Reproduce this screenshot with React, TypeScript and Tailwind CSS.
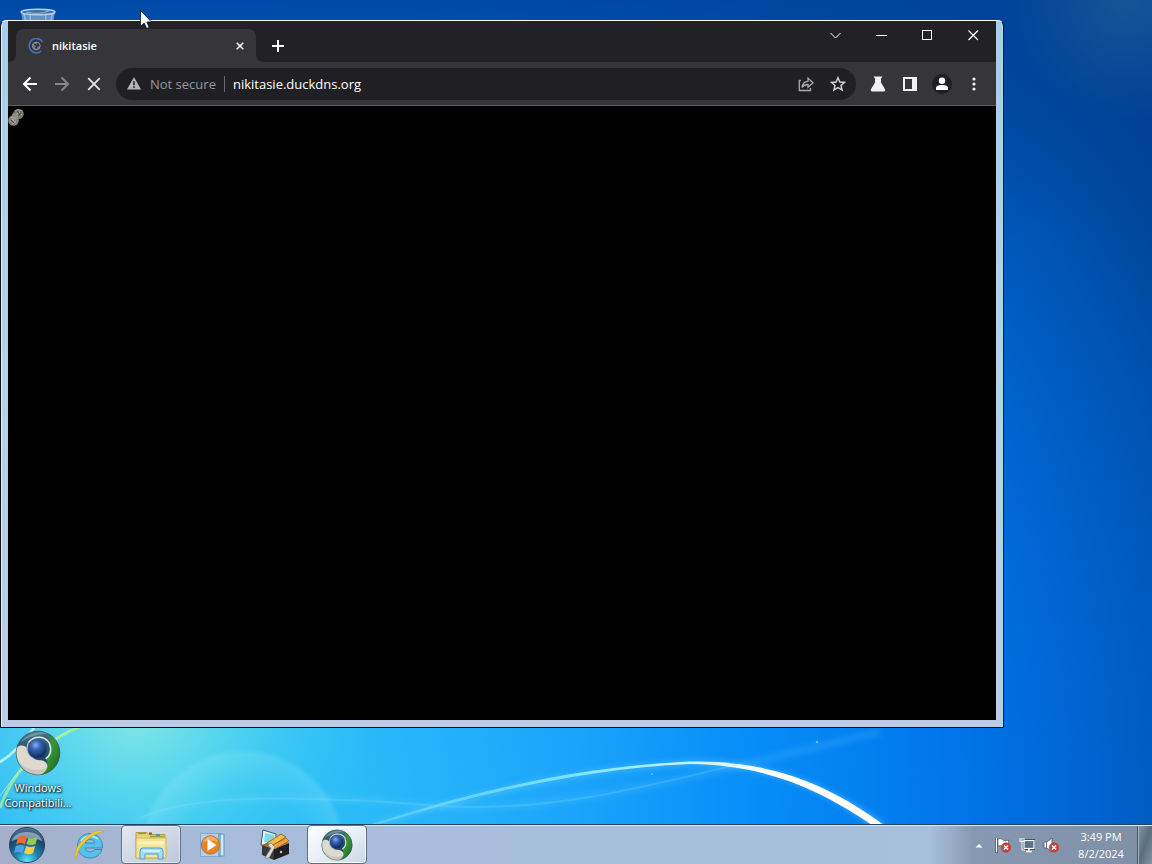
import { useState, type ReactNode } from "react"

function Wallpaper() {
  return (
    <svg className="absolute inset-0 h-full w-full" viewBox="0 0 1152 824" preserveAspectRatio="none" aria-hidden="true">
      <defs>
        <radialGradient id="sky" gradientUnits="userSpaceOnUse" cx="200" cy="800" r="1180">
          <stop offset="0" stopColor="#22bff5" />
          <stop offset="0.14" stopColor="#2abaf8" />
          <stop offset="0.32" stopColor="#1aa4fb" />
          <stop offset="0.48" stopColor="#068cf8" />
          <stop offset="0.64" stopColor="#0075ea" />
          <stop offset="0.76" stopColor="#0063cf" />
          <stop offset="0.86" stopColor="#0054b2" />
          <stop offset="0.97" stopColor="#004293" />
          <stop offset="1" stopColor="#003f8e" />
        </radialGradient>
        <radialGradient id="leftGlow" gradientUnits="userSpaceOnUse" cx="135" cy="705" r="250">
          <stop offset="0" stopColor="#8ae9e4" />
          <stop offset="0.35" stopColor="#6be0ea" stopOpacity="0.7" />
          <stop offset="1" stopColor="#3cc8f6" stopOpacity="0" />
        </radialGradient>
        <linearGradient id="topShade" x1="0" y1="0" x2="0" y2="1">
          <stop offset="0" stopColor="#00439c" stopOpacity="0.85" />
          <stop offset="1" stopColor="#00439c" stopOpacity="0" />
        </linearGradient>
        <radialGradient id="cornerHaze" gradientUnits="userSpaceOnUse" cx="1125" cy="0" r="120">
          <stop offset="0" stopColor="#1d5d93" stopOpacity="0.7" />
          <stop offset="1" stopColor="#1d5d93" stopOpacity="0" />
        </radialGradient>
        <radialGradient id="disc" gradientUnits="userSpaceOnUse" cx="243" cy="852" r="104">
          <stop offset="0.6" stopColor="#a5f0f8" stopOpacity="0" />
          <stop offset="0.94" stopColor="#a5f0f8" stopOpacity="0.2" />
          <stop offset="1" stopColor="#a5f0f8" stopOpacity="0" />
        </radialGradient>
        <linearGradient id="arc" gradientUnits="userSpaceOnUse" x1="370" y1="0" x2="880" y2="0">
          <stop offset="0" stopColor="#6fdcff" stopOpacity="0.5" />
          <stop offset="0.4" stopColor="#7ce4ff" />
          <stop offset="0.7" stopColor="#d8f8ff" />
          <stop offset="0.8" stopColor="#ffffff" />
        </linearGradient>
        <filter id="soft" x="-10%" y="-30%" width="120%" height="160%">
          <feGaussianBlur stdDeviation="3" />
        </filter>
      </defs>
      <rect width="1152" height="824" fill="url(#sky)" />
      <rect width="1152" height="240" fill="url(#topShade)" />
      <rect width="1152" height="824" fill="url(#cornerHaze)" />
      <rect width="1152" height="824" fill="url(#leftGlow)" />
      <circle cx="243" cy="852" r="104" fill="url(#disc)" />
      <path d="M130 822C190 796 270 796 340 799C390 801 410 806 450 807C560 812 690 777 880 732" fill="none" stroke="#7fdcff" strokeOpacity="0.22" strokeWidth="5" filter="url(#soft)" />
      <path d="M140 818C190 796 270 797 340 800C400 801 420 806 460 807C560 809 640 788 740 764" fill="none" stroke="#9ce8ff" strokeOpacity="0.18" strokeWidth="2" />
      <path d="M0 762C12 755 24 742 34 728" fill="none" stroke="#c9fbf9" strokeWidth="3" opacity="0.8" />
      <path d="M0 808C14 768 42 742 82 726" fill="none" stroke="#a6ef9c" strokeWidth="3" opacity="0.8" />
      <path d="M0 796C18 770 44 744 70 730" fill="none" stroke="#d9f7b8" strokeWidth="1" opacity="0.6" />
      <path
        d="M372 824C470 794 570 769 680 762C770 758 830 786 888 826L872 826C820 786 765 765 690 765C580 770 476 796 376 825Z"
        fill="#8fdcff"
        opacity="0.5"
        filter="url(#soft)"
      />
      <path
        d="M372 824C468 793 570 768 680 762C768 758 828 784 884 825L872 825C815 786 762 765 690 764C580 769 474 795 376 825Z"
        fill="url(#arc)"
      />
      <circle cx="817" cy="742" r="1.2" fill="#6fc0ff" />
      <circle cx="652" cy="774" r="1" fill="#5fc4ff" />
    </svg>
  )
}

function RecycleBin() {
  return (
    <svg viewBox="0 0 38 44" className="h-11 w-[38px]" aria-hidden="true">
      <path d="M2 4L8 42H30L36 4Z" fill="#7fa9d6" opacity="0.75" />
      <path d="M5 6L8 20M11 7L12 20M27 7L26 20M33 6L31 20" stroke="#b9d3ee" strokeWidth="1.5" opacity="0.6" />
      <ellipse cx="19" cy="4" rx="17" ry="2.8" fill="#3c6ea8" stroke="#b9d0e6" strokeWidth="1.4" />
      <path d="M7 4Q19 7 30 3" fill="none" stroke="#8fb4da" />
    </svg>
  )
}

// Three-blade swirl with a blue ball, used on the desktop and in the taskbar
function BrowserLogo({ className }: { className: string }) {
  return (
    <svg viewBox="0 0 48 48" className={className} aria-hidden="true">
      <defs>
        <radialGradient id="ball" cx="0.4" cy="0.3" r="0.75">
          <stop offset="0" stopColor="#86aeea" />
          <stop offset="0.35" stopColor="#3765b4" />
          <stop offset="1" stopColor="#0d2252" />
        </radialGradient>
        <linearGradient id="bladeTop" x1="0" y1="0" x2="0" y2="1">
          <stop offset="0" stopColor="#4c7286" />
          <stop offset="0.6" stopColor="#1e4866" />
          <stop offset="1" stopColor="#2f5a6c" />
        </linearGradient>
        <linearGradient id="bladeGreen" x1="0" y1="0" x2="1" y2="1">
          <stop offset="0" stopColor="#2b7a3c" />
          <stop offset="0.5" stopColor="#3a9434" />
          <stop offset="1" stopColor="#155e26" />
        </linearGradient>
      </defs>
      <circle cx="24" cy="24" r="23" fill="url(#bladeTop)" />
      <path d="M34 3.5C44 9 48.5 20 46 29C43 40 35 46 26 47C34 41 36 36 32 30C38 23 38 11 34 3.5Z" fill="url(#bladeGreen)" />
      <path d="M1.5 19C4 15.5 8 15.500 12 18C12 27 19 32 28 31.500C36 34 36 41 27 46.8C12 48 -1 36 1.5 19Z" fill="#dedad0" />
      <path d="M4 33C10 40 20 44 32 40C30 44 28 46 26 46.500C15 47 7 41 4 33Z" fill="#b6b3ab" opacity="0.5" />
      <path d="M14 13C20 5 32 6 36 14C39 22 36 28 32 30" fill="none" stroke="#dfe9ee" strokeWidth="1.6" />
      <path d="M14 13C11 20 13 28 20 30" fill="none" stroke="#b6cbd8" strokeWidth="1.2" />
      <circle cx="23.5" cy="19.5" r="9.5" fill="url(#ball)" />
      <path d="M6 13C12 4 24 0 34 4C25 4 14 7 6 13Z" fill="#a7c3cf" opacity="0.45" />
      <circle cx="24" cy="24" r="22.8" fill="none" stroke="#3a5a56" strokeOpacity="0.6" />
    </svg>
  )
}

function StartOrb() {
  return (
    <svg viewBox="0 0 40 40" className="h-[38px] w-[38px]" aria-hidden="true">
      <defs>
        <radialGradient id="orb" cx="0.5" cy="0.95" r="0.95">
          <stop offset="0" stopColor="#5fe4ff" />
          <stop offset="0.35" stopColor="#1c86ac" />
          <stop offset="0.7" stopColor="#1d4668" />
          <stop offset="1" stopColor="#54789b" />
        </radialGradient>
      </defs>
      <circle cx="20" cy="20" r="18.5" fill="url(#orb)" stroke="#27455f" />
      <path d="M4 16C7 3 33 3 36 16C28 12 12 12 4 16Z" fill="#dbe8f2" opacity="0.5" />
      <path d="M10.5 12C14 9.5 17 10 20 11.5L18 19C15 17.5 12 17.5 8.5 19.5Z" fill="#ee6a32" />
      <path d="M21.5 12C25 13.5 28 13 31 11.5L29 19C26 20.5 22.5 20.5 19.5 19Z" fill="#94cc4e" />
      <path d="M8 21.5C11 19.5 14.5 19.5 17.5 21L15.5 28.5C12.5 27 9.5 27 6.5 28.5Z" fill="#4aa2e4" />
      <path d="M19 21C22 22.5 25 22.5 28.5 21L26.5 28.5C23 30.5 20 30 17 28.5Z" fill="#fbcb45" />
    </svg>
  )
}

function ExplorerE() {
  return (
    <svg viewBox="0 0 32 32" className="h-8 w-8" aria-hidden="true">
      <path
        d="M17 4.5C9.500 4.500 4.500 10 4.500 16.700C4.500 24 10 29 17 29C23 29 27.500 25.500 29 20.500H21.500C20.500 22 19 22.800 17 22.800C14.300 22.800 12.600 21.300 12.300 19H29.500C30 10.500 24.500 4.500 17 4.500ZM12.400 14C12.900 11.700 14.600 10.500 17.200 10.500C19.800 10.500 21.500 11.700 21.800 14Z"
        fill="#56c0ea"
        stroke="#2184b8"
        strokeWidth="0.8"
      />
      <path d="M8 12C11 6.500 20 5.500 25 10" fill="none" stroke="#b9ecfb" strokeWidth="1.5" />
      <path d="M4 29C-1 26 5 14 14 7.5C21 2 28 0 31 3C27 2.500 20 6 14.500 10.500C7.500 16.500 3.500 24 4 29Z" fill="#f6cb32" stroke="#c79a1c" strokeWidth="0.5" />
    </svg>
  )
}

function FolderIcon() {
  return (
    <svg viewBox="0 0 34 32" className="h-8 w-[34px]" aria-hidden="true">
      <path d="M2 3.5H13L15 5.5H31V29H2Z" fill="#e8d37f" stroke="#b49a45" />
      <path d="M4 4.5H12M16 7.5H30" stroke="#86a63c" strokeWidth="1.5" />
      <rect x="15" y="3.5" width="3" height="2" fill="#a34f30" />
      <rect x="22" y="5" width="4" height="2" fill="#4f93c4" />
      <path d="M2 9H32V29H2Z" fill="#f3e596" stroke="#ccb55f" />
      <path d="M4 14H30" stroke="#fdf4bd" strokeWidth="3" />
      <path d="M6 30V22Q6 19 9 19H26Q29 19 29 22V30H24V25H11V30Z" fill="#a5dcf1" stroke="#4aa0cc" />
      <path d="M9 22H26" stroke="#e2f7fd" strokeWidth="1.5" />
    </svg>
  )
}

function MediaPlayerIcon() {
  return (
    <svg viewBox="0 0 28 28" className="h-7 w-7" aria-hidden="true">
      <rect x="9" y="3" width="16" height="22" fill="#cfe4f2" stroke="#5f98c4" />
      <rect x="5" y="3" width="16" height="22" fill="#a9cce6" stroke="#4d8abb" />
      <rect x="1.5" y="2.5" width="18" height="23" fill="#b5cfe9" stroke="#7ea8d0" />
      <circle cx="11.5" cy="14" r="9.2" fill="#e88426" stroke="#c0743a" />
      <path d="M4 11C6 3.5 17 3.5 19 11C14 9 9 10 4 11Z" fill="#f9be7b" opacity="0.7" />
      <path d="M8.5 8L17.5 14L8.5 20Z" fill="#fff" />
    </svg>
  )
}

function ToolboxIcon() {
  return (
    <svg viewBox="0 0 32 32" className="h-8 w-8" aria-hidden="true">
      <path d="M4 1L17 5V18L2 16Z" fill="#e5f7fa" stroke="#3d5560" />
      <path d="M6 4L15 6V14L5 13Z" fill="#7fdbe9" />
      <path d="M3 16L15 20V31L3 26Z" fill="#39393b" />
      <path d="M15 20L30 14V25L15 31Z" fill="#201f21" />
      <path d="M3 16L18 9L30 14L15 20Z" fill="#a26a35" />
      <path d="M8 14L22 5L27 8L13 17Z" fill="#f4bd43" stroke="#8a5414" strokeWidth="0.8" />
      <path d="M12 17L27 9L30 12L16 20Z" fill="#eda53a" stroke="#8a5414" strokeWidth="0.6" />
      <path d="M6 29L12 19L9 16L12 14L16 18L10 29Z" fill="#dcdcdc" stroke="#77777a" strokeWidth="0.6" />
      <circle cx="22" cy="23" r="1.2" fill="#c9c9c9" />
    </svg>
  )
}

function TaskButton({ label, active, children }: { label: string; active?: "open" | "focused"; children: ReactNode }) {
  const look =
    active === "focused"
      ? "border-[#5f6f86] bg-linear-to-br from-white via-[#e8eff5] to-[#c9d8e8] shadow-[inset_0_0_0_1px_#f5f9fc]"
      : active === "open"
        ? "border-[#5f6f86] bg-linear-to-br from-[#e3e7f1] to-[#bec8da] shadow-[inset_0_0_0_1px_#dfe6f0]"
        : "border-transparent"
  return (
    <button aria-label={label} className={`flex w-[60px] items-center justify-center rounded-sm border ${look}`}>
      {children}
    </button>
  )
}

function ErrorBadge() {
  return (
    <g>
      <circle cx="11" cy="10.5" r="4.8" fill="#cf3d38" stroke="#a5524f" strokeWidth="0.6" />
      <path d="M9 8.5L13 12.5M13 8.5L9 12.5" stroke="#fff" strokeWidth="1.6" />
    </g>
  )
}

function Taskbar() {
  return (
    <footer className="relative flex h-10 shrink-0 border-t border-[#1d4468] bg-linear-to-r from-[#a4aec9] via-[#a7bcdb] via-20% to-[#a7c1dc] shadow-[inset_0_1px_0_#dbe9f5]">
      <button aria-label="Start" className="mr-[5px] flex w-[54px] items-center justify-center">
        <StartOrb />
      </button>
      <div className="flex flex-1 gap-0.5">
        <TaskButton label="Internet Explorer">
          <ExplorerE />
        </TaskButton>
        <TaskButton label="Windows Explorer" active="open">
          <FolderIcon />
        </TaskButton>
        <TaskButton label="Windows Media Player">
          <MediaPlayerIcon />
        </TaskButton>
        <TaskButton label="Toolbox">
          <ToolboxIcon />
        </TaskButton>
        <TaskButton label="nikitasie" active="focused">
          <BrowserLogo className="h-8 w-8" />
        </TaskButton>
      </div>
      <div className="mt-px flex items-center bg-linear-to-r from-transparent via-[#8799b2] via-20% to-[#7e8fa6] pl-10 text-white">
        <button aria-label="Show hidden icons" className="flex h-6 w-5 items-center justify-center">
          <svg viewBox="0 0 8 5" className="h-[5px] w-2">
            <path d="M0.5 4.5L4 1L7.5 4.5Z" fill="#fff" />
          </svg>
        </button>
        <div className="ml-1 flex gap-1">
          <button aria-label="Action Center" className="flex w-5 justify-center">
            <svg viewBox="0 0 16 16" className="h-4 w-4">
              <path d="M1.5 1V16" stroke="#333f4d" strokeWidth="3" />
              <path d="M1.5 1V15.5" stroke="#fff" strokeWidth="1.5" />
              <path d="M3 2Q6 1 8 3T13.5 3V9Q10 10 8 9T3 9Z" fill="#fff" stroke="#3f4b5b" strokeWidth="0.6" />
              <ErrorBadge />
            </svg>
          </button>
          <button aria-label="Network" className="flex w-5 justify-center">
            <svg viewBox="0 0 16 16" className="h-4 w-4">
              <rect x="5" y="3.5" width="10" height="8" fill="#5d7089" stroke="#333f4d" strokeWidth="3" />
              <rect x="5" y="3.5" width="10" height="8" fill="#5d7089" stroke="#fff" strokeWidth="1.2" />
              <path d="M10 12V14M7 14.5H13" stroke="#fff" strokeWidth="1.4" />
              <path d="M1 1V4M3 1V4M5 1V4M0.5 4.5H5.5M3 5V13H6" stroke="#fff" fill="none" />
            </svg>
          </button>
          <button aria-label="Volume" className="flex w-5 justify-center">
            <svg viewBox="0 0 16 16" className="h-4 w-4">
              <path d="M1 5H4L9 1V15L4 11H1Z" fill="#fff" stroke="#47566a" strokeWidth="0.8" />
              <path d="M3.5 5V11" stroke="#47566a" strokeWidth="0.8" />
              <ErrorBadge />
            </svg>
          </button>
        </div>
        <div className="flex w-[76px] flex-col items-center pl-1 text-[11px] leading-[17px]">
          <time dateTime="15:49">3:49 PM</time>
          <time dateTime="2024-08-02">8/2/2024</time>
        </div>
        <button
          aria-label="Show desktop"
          className="h-full w-[15px] border-l border-[#46566a] bg-linear-to-br from-[#8494a4] via-[#5a6e80] to-[#8294a4] shadow-[inset_1px_0_0_#a6b4c2]"
        />
      </div>
    </footer>
  )
}

function CaptionButton({ label, children }: { label: string; children: ReactNode }) {
  return (
    <button aria-label={label} className="flex h-7 w-[46px] items-center justify-center">
      <svg viewBox="0 0 11 11" className="h-[11px] w-[11px]" fill="none" stroke="#fff">
        {children}
      </svg>
    </button>
  )
}

function ToolButton({ label, children }: { label: string; children: ReactNode }) {
  return (
    <button aria-label={label} className="flex h-8 w-8 shrink-0 items-center justify-center">
      {children}
    </button>
  )
}

function TabStrip() {
  return (
    <div className="flex h-[41px] items-end justify-between bg-[#222226] pl-2">
      <div className="flex h-[33px] items-center">
        <div className="relative flex h-full w-60 items-center rounded-t-lg bg-[#35353a] pr-2 pl-3">
          <svg viewBox="0 0 8 8" className="absolute bottom-0 -left-2 h-2 w-2" aria-hidden="true">
            <path d="M8 0V8H0Q8 8 8 0Z" fill="#35353a" />
          </svg>
          <svg viewBox="0 0 8 8" className="absolute -right-2 bottom-0 h-2 w-2" aria-hidden="true">
            <path d="M0 0V8H8Q0 8 0 0Z" fill="#35353a" />
          </svg>
          <svg viewBox="0 0 16 16" className="h-4 w-4" aria-hidden="true">
            <path d="M14.5 4A7.2 7.2 0 1 0 13 13.2" fill="none" stroke="#3f72b8" strokeWidth="1.6" />
            <circle cx="8.3" cy="8" r="4.2" fill="#6b7484" />
            <circle cx="8.3" cy="8" r="3.8" fill="none" stroke="#8b98ad" strokeWidth="0.8" />
            <path d="M6.5 6L9 8L8 10.5M9.5 5.5L11 8" stroke="#26282d" strokeWidth="1.6" fill="none" />
          </svg>
          <span className="ml-2 flex-1 text-[11px] leading-4 font-semibold text-white">nikitasie</span>
          <button aria-label="Close tab" className="flex h-4 w-4 items-center justify-center">
            <svg viewBox="0 0 8 8" className="h-2 w-2" stroke="#fff" strokeWidth="1.6">
              <path d="M0.7 0.7L7.3 7.3M7.3 0.7L0.7 7.3" />
            </svg>
          </button>
        </div>
        <button aria-label="New tab" className="ml-2 flex h-7 w-7 items-center justify-center">
          <svg viewBox="0 0 12 12" className="h-3 w-3" stroke="#fff" strokeWidth="2">
            <path d="M6 0V12M0 6H12" />
          </svg>
        </button>
      </div>
      <div className="flex self-start">
        <CaptionButton label="Search tabs">
          <path d="M0.5 3L5.5 8L10.5 3" />
        </CaptionButton>
        <CaptionButton label="Minimize">
          <path d="M0 5.5H11" />
        </CaptionButton>
        <CaptionButton label="Maximize">
          <rect x="0.5" y="0.5" width="9" height="9" />
        </CaptionButton>
        <CaptionButton label="Close">
          <path d="M0.5 0.5L10 10M10 0.5L0.5 10" strokeWidth="1.2" />
        </CaptionButton>
      </div>
    </div>
  )
}

function Toolbar() {
  const [url, setUrl] = useState("nikitasie.duckdns.org")

  return (
    <div className="flex h-11 items-center border-b border-[#606064] bg-[#35353a] px-1.5">
      <ToolButton label="Back">
        <svg viewBox="0 0 16 16" className="h-4 w-4" fill="none" stroke="#fff" strokeWidth="2">
          <path d="M15 8H2.5M8.5 1.5L2 8L8.5 14.5" />
        </svg>
      </ToolButton>
      <ToolButton label="Forward">
        <svg viewBox="0 0 16 16" className="h-4 w-4" fill="none" stroke="#85868a" strokeWidth="2">
          <path d="M1 8H13.5M7.5 1.5L14 8L7.5 14.5" />
        </svg>
      </ToolButton>
      <ToolButton label="Stop">
        <svg viewBox="0 0 14 14" className="h-3.5 w-3.5" stroke="#e6e6e8" strokeWidth="1.8">
          <path d="M1.200 1.200L12.800 12.800M12.800 1.200L1.200 12.800" />
        </svg>
      </ToolButton>
      <div className="mx-1.5 flex h-8 min-w-0 flex-1 items-center rounded-full bg-[#202024] pr-0.5 pl-[11px] text-[13px] leading-5">
        <button className="flex shrink-0 items-center text-[#96979b]">
          <svg viewBox="0 0 14 13" className="mr-[9px] h-[13px] w-3.5" aria-hidden="true">
            <path d="M7 0L14 12.5H0Z" fill="#b3b4b7" />
            <path d="M7 4.2V8.3M7 9.3V11" stroke="#202024" strokeWidth="1.5" />
          </svg>
          Not secure
        </button>
        <span className="mx-2 h-4 w-px bg-[#6b6c70]" />
        <input
          aria-label="Address"
          value={url}
          onChange={(e) => setUrl(e.target.value)}
          className="min-w-0 flex-1 bg-transparent pt-px text-white outline-none"
        />
        <ToolButton label="Share">
          <svg viewBox="0 0 16 16" className="h-4 w-4" fill="none" stroke="#a9aaad" strokeWidth="1.3">
            <path d="M3 4.5H1.300V14.500H12.500V12" />
            <path d="M4 11.500C4.500 7.500 6.500 5.500 10 5.300V2.300L15 6.800L10 11.300V8.500C7.500 8.500 5.500 9.300 4 11.500Z" />
          </svg>
        </ToolButton>
        <ToolButton label="Bookmark this tab">
          <svg viewBox="0 0 24 24" className="h-4 w-4" fill="none" stroke="#d2d2d4" strokeWidth="2.2">
            <path d="M12 2.5L14.8 9L21.8 9.6L16.5 14.2L18.1 21.1L12 17.4L5.9 21.1L7.5 14.2L2.2 9.6L9.2 9Z" />
          </svg>
        </ToolButton>
      </div>
      <ToolButton label="Experiments">
        <svg viewBox="0 0 16 16" className="h-4 w-4" fill="#f1f1f2">
          <path d="M3.5 0.5H12.5L11 2.5V6.5L15.2 13.5Q15.5 15.5 14 15.5H2Q0.5 15.5 0.8 13.5L5 6.5V2.5Z" />
        </svg>
      </ToolButton>
      <ToolButton label="Side panel">
        <svg viewBox="0 0 16 16" className="h-4 w-4">
          <rect x="1" y="1" width="14" height="14" fill="#f1f1f2" />
          <rect x="3" y="3" width="7" height="10" fill="#35353a" />
        </svg>
      </ToolButton>
      <ToolButton label="Profile">
        <svg viewBox="0 0 20 20" className="h-5 w-5">
          <circle cx="10" cy="10" r="10" fill="#202024" />
          <circle cx="10" cy="6.8" r="3.2" fill="#fff" />
          <path d="M4 16V14Q4 11 10 11T16 14V16Z" fill="#fff" />
        </svg>
      </ToolButton>
      <ToolButton label="Menu">
        <svg viewBox="0 0 4 14" className="h-3.5 w-1" fill="#f1f1f2">
          <circle cx="2" cy="2" r="1.6" />
          <circle cx="2" cy="7" r="1.6" />
          <circle cx="2" cy="12" r="1.6" />
        </svg>
      </ToolButton>
    </div>
  )
}

function BrowserWindow() {
  return (
    <section
      aria-label="nikitasie"
      className="absolute top-5 right-[148px] bottom-24 left-0 flex flex-col rounded-t-md border-x border-t border-b border-x-[#10141c] border-t-white border-b-[#10141c] bg-linear-to-b from-[#a6cdea] via-[#b2d3e8] via-50% to-[#bccbe6] px-[7px] pb-[7px] shadow-[inset_1px_0_0_#e6eef8,inset_-1px_0_0_#a4dcf0]"
    >
      <TabStrip />
      <Toolbar />
      <main className="flex-1 bg-black">
        <svg viewBox="0 0 16 20" className="h-5 w-4" aria-hidden="true">
          <circle cx="10.5" cy="8" r="5.3" fill="#77766d" />
          <circle cx="5.5" cy="14.5" r="5.3" fill="#85847a" />
          <circle cx="7" cy="10.500" r="3.500" fill="#8e8d83" />
          <path d="M7 5Q10 2.500 14 5M8 9L11 6L14 9M2 12Q5 10 8 13M2 16L5 13L7 17M4 19L8 15" fill="none" stroke="#aeac9f" strokeWidth="0.9" />
          <path d="M9 5L12 8M3 14L6 17M10 10L13 7" stroke="#3f3e39" strokeWidth="0.9" />
        </svg>
      </main>
    </section>
  )
}

function MousePointer() {
  return (
    <svg viewBox="0 0 12 19" className="absolute top-2.5 left-[140px] h-[19px] w-3" aria-hidden="true">
      <path d="M0.5 0.5V16.5L4.2 13L6.7 18.5L9.2 17.4L6.8 12H11.5Z" fill="#fff" stroke="#000" strokeWidth="0.7" />
    </svg>
  )
}

export default function App() {
  return (
    <div className="flex h-screen flex-col overflow-hidden font-['Open_Sans','Noto_Sans',sans-serif]">
      <div className="relative flex-1">
        <Wallpaper />
        <div className="absolute top-2 left-[19px]">
          <RecycleBin />
        </div>
        <a
          href="#compatibility"
          className="absolute bottom-3.5 left-0 flex w-[76px] flex-col items-center text-center text-[11px] leading-[15px] font-medium text-white [text-shadow:1px_1px_2px_#000,0_0_3px_#000]"
        >
          <BrowserLogo className="mb-1 h-[46px] w-[46px]" />
          <span>Windows</span>
          <span className="whitespace-nowrap">Compatibili...</span>
        </a>
        <BrowserWindow />
        <MousePointer />
      </div>
      <Taskbar />
    </div>
  )
}
